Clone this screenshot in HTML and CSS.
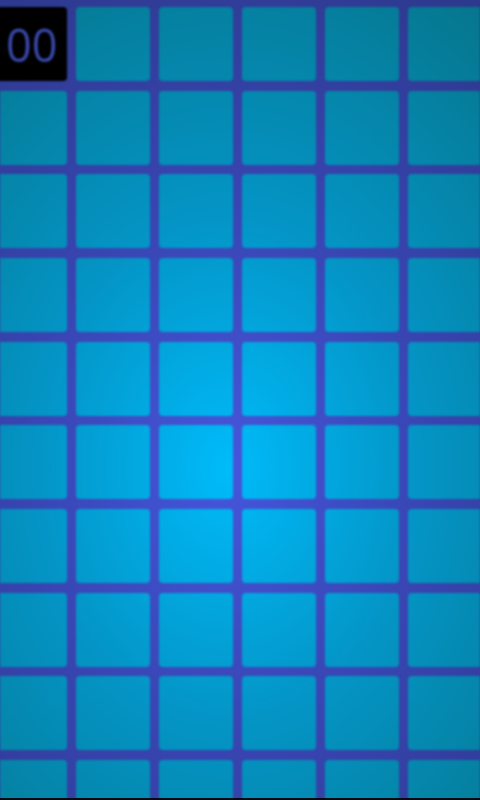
FILE: index.html
```html
<!DOCTYPE html>
<html>
<head>
<meta charset="utf-8">
<link rel="stylesheet" href="styles.css">
</head>
<body>
<div class="board">
  <div class="grid">
    <div class="tile score"><span class="num">00</span></div>
    <div class="tile"></div><div class="tile"></div><div class="tile"></div><div class="tile"></div><div class="tile"></div>
    <div class="tile"></div><div class="tile"></div><div class="tile"></div><div class="tile"></div><div class="tile"></div><div class="tile"></div>
    <div class="tile"></div><div class="tile"></div><div class="tile"></div><div class="tile"></div><div class="tile"></div><div class="tile"></div>
    <div class="tile"></div><div class="tile"></div><div class="tile"></div><div class="tile"></div><div class="tile"></div><div class="tile"></div>
    <div class="tile"></div><div class="tile"></div><div class="tile"></div><div class="tile"></div><div class="tile"></div><div class="tile"></div>
    <div class="tile"></div><div class="tile"></div><div class="tile"></div><div class="tile"></div><div class="tile"></div><div class="tile"></div>
    <div class="tile"></div><div class="tile"></div><div class="tile"></div><div class="tile"></div><div class="tile"></div><div class="tile"></div>
    <div class="tile"></div><div class="tile"></div><div class="tile"></div><div class="tile"></div><div class="tile"></div><div class="tile"></div>
    <div class="tile"></div><div class="tile"></div><div class="tile"></div><div class="tile"></div><div class="tile"></div><div class="tile"></div>
    <div class="tile"></div><div class="tile"></div><div class="tile"></div><div class="tile"></div><div class="tile"></div><div class="tile"></div>
  </div>
</div>
</body>
</html>
```
FILE: styles.css
```css
html {
  margin: 0;
  background: #050a14;
}
body {
  margin: 0;
  width: 480px;
  height: 800px;
  overflow: hidden;
  font-family: "Open Sans", "DejaVu Sans", sans-serif;
}
.board {
  height: 798px;
  overflow: hidden;
  background: radial-gradient(ellipse 420px 560px at 228px 468px, #4656dc 0%, #3946b4 45%, #2d398c 100%);
}
.grid {
  display: grid;
  grid-template-columns: repeat(6, 74px);
  grid-auto-rows: 74px;
  column-gap: 9px;
  row-gap: 9.67px;
  margin-left: -7px;
  padding-top: 7px;
  filter: blur(0.8px);
}
.tile {
  border-radius: 4px;
  background: radial-gradient(ellipse 420px 560px at 228px 468px, #00bbfa 0%, #0495c6 45%, #06778f 100%);
  background-attachment: fixed;
}
.score {
  background: #000;
  display: flex;
  align-items: center;
  padding-left: 13px;
}
.num {
  font-size: 45px;
  color: #3848aa;
}
```
